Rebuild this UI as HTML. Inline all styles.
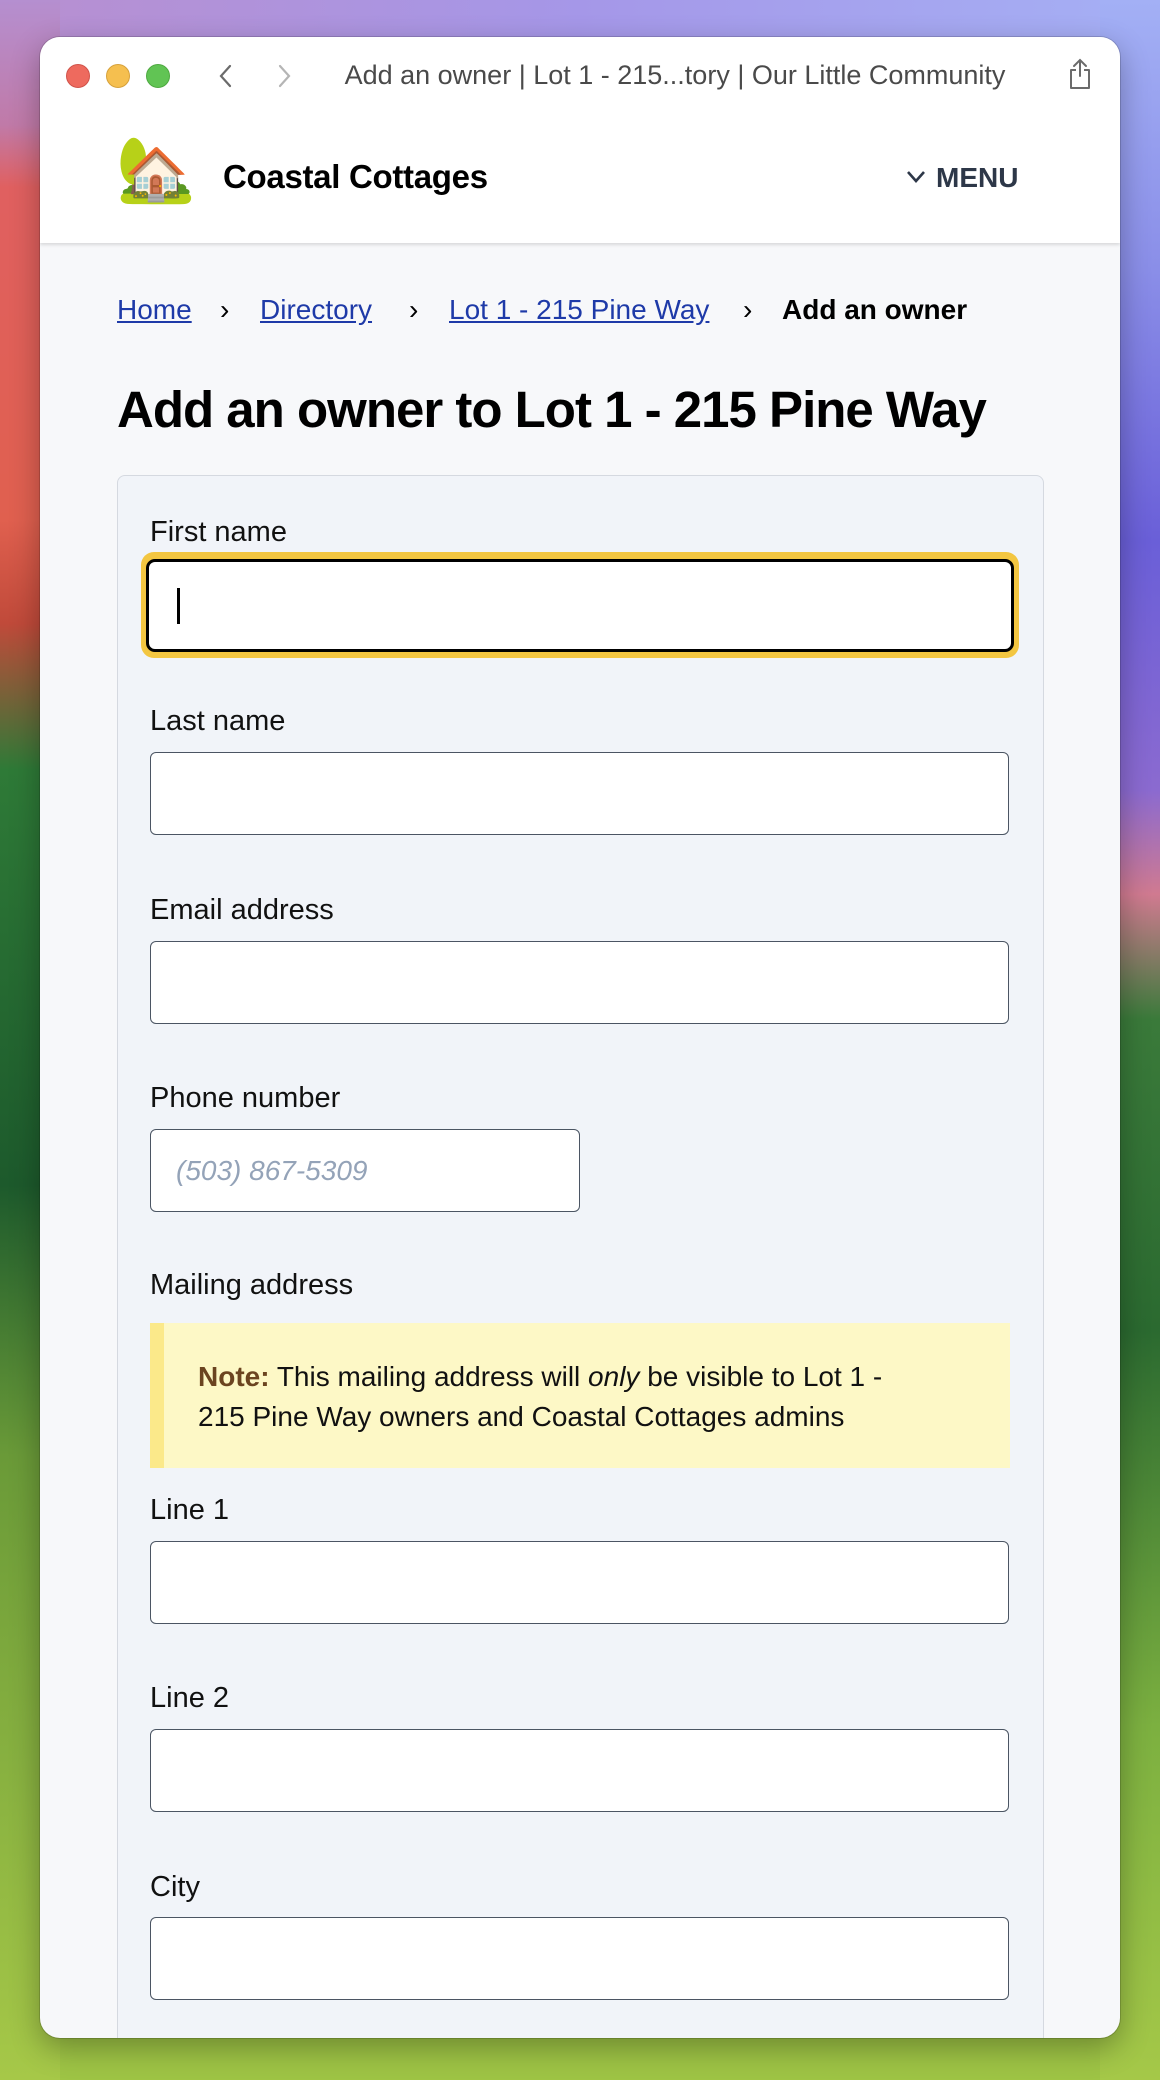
<!DOCTYPE html>
<html><head><meta charset="utf-8"><style>
*{box-sizing:border-box;margin:0;padding:0}
html,body{width:1160px;height:2080px;overflow:hidden}
body{position:relative;font-family:"Liberation Sans",sans-serif;background:#9ec445}
.strip{position:absolute}
.win{position:absolute;left:40px;top:37px;width:1080px;height:2001px;border-radius:20px;overflow:hidden;background:#f7f8fa;box-shadow:0 0 0 1px rgba(0,0,0,.15),0 10px 30px rgba(0,0,0,.3)}
.a{position:absolute}
.dot{position:absolute;top:27px;width:24px;height:24px;border-radius:50%}
.lbl{position:absolute;left:110px;font-size:29px;color:#111;line-height:1}
.inp{position:absolute;left:110px;width:859px;height:83px;background:#fff;border:1.5px solid #4b5563;border-radius:6px}
</style></head><body>
<div class="strip" style="left:0;top:0;width:1160px;height:60px;background:linear-gradient(90deg,#b88fd0,#a597e8 50%,#a5b0f5)"></div>
<div class="strip" style="left:0;top:0;width:60px;height:2080px;background:linear-gradient(180deg,#b58fd0 0%,#c07aa8 6%,#e06060 9%,#e0604f 25%,#c04a3a 30%,#2e7a37 37%,#1d5a2c 57%,#6a9a38 70%,#a6c848 100%)"></div>
<div class="strip" style="left:1100px;top:0;width:60px;height:2080px;background:linear-gradient(180deg,#a3b0f5 0%,#8a8ee8 13%,#6a5fd8 26%,#8b6ad0 38%,#d07a90 43%,#3a7a3a 49%,#2b6a30 64%,#7cb040 83%,#a5c848 100%)"></div>
<div class="win">
 <div class="a" style="left:0;top:0;width:1080px;height:206px;background:#fff;box-shadow:0 2px 3px rgba(0,0,0,.12)"></div>
 <div class="dot" style="left:26px;background:#ee6a5e;border:1px solid #d0534a"></div>
 <div class="dot" style="left:66px;background:#f5bf4f;border:1px solid #d6a13b"></div>
 <div class="dot" style="left:106px;background:#61c454;border:1px solid #4ea940"></div>
 <svg class="a" style="left:176px;top:26px" width="20" height="26"><path d="M14 3 L5 13 L14 23" stroke="#6b6b6b" stroke-width="2.2" fill="none" stroke-linecap="round"/></svg>
 <svg class="a" style="left:234px;top:26px" width="20" height="26"><path d="M6 3 L15 13 L6 23" stroke="#b5b5b5" stroke-width="2.2" fill="none" stroke-linecap="round"/></svg>
 <div class="a" style="left:295px;top:23px;width:680px;text-align:center;font-size:27px;color:#4a4a4a;white-space:nowrap">Add an owner | Lot 1 - 215...tory | Our Little Community</div>
 <svg class="a" style="left:1027px;top:20px" width="26" height="34"><path d="M13 3 V19 M7 9 L13 3 L19 9" stroke="#6b6b6b" stroke-width="2" fill="none" stroke-linecap="round"/><path d="M9 13 H4 V31 H22 V13 H17" stroke="#6b6b6b" stroke-width="2" fill="none" stroke-linejoin="round"/></svg>
 <div class="a" style="left:76px;top:100px;font-size:64px;line-height:1">🏡</div>
 <div class="a" style="left:183px;top:121px;font-size:33px;font-weight:bold;color:#000;letter-spacing:-.3px">Coastal Cottages</div>
 <svg class="a" style="left:866px;top:132px" width="20" height="16"><path d="M2 3 L10 12 L18 3" stroke="#2d3748" stroke-width="2.6" fill="none"/></svg>
 <div class="a" style="left:896px;top:125px;font-size:28px;font-weight:bold;color:#2d3748">MENU</div>

 <div class="a" style="left:77px;top:257px;font-size:28px;white-space:nowrap;color:#000">
  <span style="position:absolute;left:0;color:#1e3aa8;text-decoration:underline">Home</span>
  <span style="position:absolute;left:103px">›</span>
  <span style="position:absolute;left:143px;color:#1e3aa8;text-decoration:underline">Directory</span>
  <span style="position:absolute;left:292px">›</span>
  <span style="position:absolute;left:332px;color:#1e3aa8;text-decoration:underline">Lot 1 - 215 Pine Way</span>
  <span style="position:absolute;left:626px">›</span>
  <span style="position:absolute;left:665px;font-weight:bold">Add an owner</span>
 </div>
 <div class="a" style="left:77px;top:343px;font-size:51px;font-weight:bold;color:#000;letter-spacing:-1px;white-space:nowrap">Add an owner to Lot 1 - 215 Pine Way</div>

 <div class="a" style="left:77px;top:438px;width:927px;height:1600px;background:#f1f4f9;border:1.5px solid #d5d9e0;border-radius:8px"></div>

 <div class="lbl" style="top:481px">First name</div>
 <div class="a" style="left:101px;top:515px;width:878px;height:106px;border-radius:13px;background:#f3c641"></div>
 <div class="a" style="left:106px;top:522px;width:868px;height:93px;border-radius:9px;background:#fff;border:3px solid #000"></div>
 <div class="a" style="left:137px;top:551px;width:3px;height:36px;background:#000"></div>

 <div class="lbl" style="top:670px">Last name</div>
 <div class="inp" style="top:715px"></div>
 <div class="lbl" style="top:859px">Email address</div>
 <div class="inp" style="top:904px"></div>
 <div class="lbl" style="top:1047px">Phone number</div>
 <div class="inp" style="top:1092px;width:430px"></div>
 <div class="a" style="left:136px;top:1118px;font-size:28px;font-style:italic;color:#94a3b8">(503) 867-5309</div>
 <div class="lbl" style="top:1234px">Mailing address</div>

 <div class="a" style="left:110px;top:1286px;width:860px;height:145px;background:#fdf8c6;border-left:14px solid #fbe98a;padding:34px 0 0 34px;font-size:28px;line-height:40px;color:#111">
  <b style="color:#6b4420">Note:</b> This mailing address will <i>only</i> be visible to Lot 1 -<br>215 Pine Way owners and Coastal Cottages admins
 </div>

 <div class="lbl" style="top:1459px">Line 1</div>
 <div class="inp" style="top:1504px"></div>
 <div class="lbl" style="top:1647px">Line 2</div>
 <div class="inp" style="top:1692px"></div>
 <div class="lbl" style="top:1836px">City</div>
 <div class="inp" style="top:1880px"></div>
</div>
</body></html>
